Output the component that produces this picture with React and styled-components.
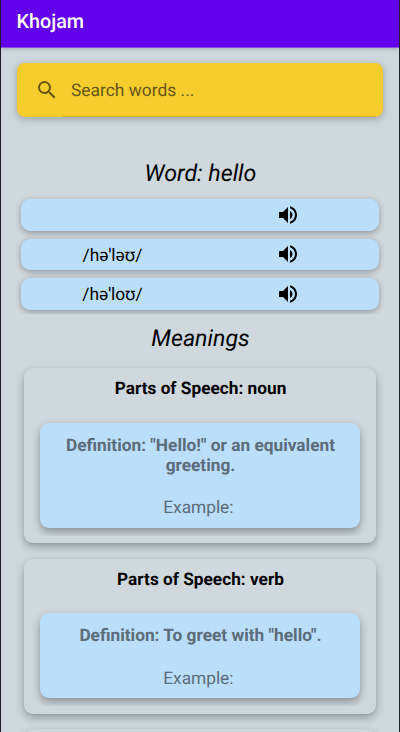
import React from "react";
import styled, { createGlobalStyle } from "styled-components";

const Global = createGlobalStyle`
  *, *::before, *::after { box-sizing: border-box; }
  body { margin: 0; overflow: hidden; background: #cfd8dd; }
`;

const Screen = styled.main`
  display: flex;
  flex-direction: column;
  height: 732px;
  overflow: hidden;
  border-left: 1px solid #1f1c2b;
  border-right: 1px solid #22252a;
  background: #cfd8dd;
  color: #000;
  font-family: Roboto, "Noto Sans", sans-serif;
  text-align: center;
  text-rendering: geometricPrecision;
`;

const AppBar = styled.header`
  flex: none;
  height: 48px;
  padding: 0 15.5px;
  background: #6200ee;
  border-bottom: 1px solid #8a50dc;
  box-shadow: 0 1px 5px rgba(0, 0, 0, 0.2);
  color: #fff;
  font-size: 19.8px;
  font-weight: 500;
  line-height: 43px;
  text-align: left;
`;

const SearchField = styled.div`
  flex: none;
  display: flex;
  align-items: center;
  height: 54px;
  margin: 15px 16px 0;
  width: 366px;
  padding-left: 18px;
  border-radius: 8px;
  background: linear-gradient(#d2ae2b, #d2ae2b) 46px 100% / 313px 1px no-repeat #f7cc2d;
  box-shadow: 0 2px 9px rgba(0, 0, 0, 0.26);
  color: #675617;
  font-size: 17.4px;
`;

const SearchText = styled.span`
  padding-top: 2px;
`;

const SearchGlyph = styled.svg`
  width: 24px;
  height: 24px;
  margin-right: 12px;
  fill: currentColor;
`;

const Heading = styled.h1`
  flex: none;
  height: 28px;
  margin: ${(p) => p.$top}px 0 0;
  padding-left: 1px;
  font-size: 23.2px;
  font-style: italic;
  font-weight: 400;
  line-height: 28px;
`;

const PhoneticList = styled.section`
  flex: none;
  display: flex;
  flex-direction: column;
  gap: 8px;
  height: 118px;
  width: 368px;
  margin: 9px auto 0;
  padding: 3px 5px 0;
  overflow: hidden;
`;

const PhoneticRow = styled.div`
  flex: none;
  display: grid;
  grid-template-columns: 183px 168px;
  align-items: center;
  height: 31.6px;
  border-radius: 9px;
  background: #bbdefb;
  box-shadow: 0 2px 6px rgba(0, 0, 0, 0.3);
  font-size: 17.4px;
`;

const PhoneticText = styled.span`
  padding-top: 1px;
`;

const SpeakerButton = styled.button`
  justify-self: center;
  display: flex;
  padding: 0;
  border: 0;
  background: none;
  color: #000;
`;

const SpeakerGlyph = styled.svg`
  width: 24px;
  height: 24px;
  fill: currentColor;
`;

const MeaningCard = styled.article`
  flex: none;
  width: 352px;
  height: ${(p) => p.$height}px;
  margin: 0 auto ${(p) => p.$gap}px;
  border-radius: 9px;
  background: #cfd8dd;
  box-shadow: 0 4px 9px rgba(0, 0, 0, 0.29), 0 0 3px rgba(0, 0, 0, 0.04);
`;

const Speech = styled.h2`
  height: 46.6px;
  margin: 0;
  padding-left: 1px;
  font-size: 17.25px;
  font-weight: 700;
  line-height: 43.4px;
`;

const DefinitionArea = styled.div`
  margin: 0 8px;
  padding: 8px 8px;
  overflow: hidden;
`;

const Definition = styled.div`
  display: flex;
  flex-direction: column;
  justify-content: space-between;
  height: ${(p) => p.$height}px;
  padding: 13px 18px 9px 19px;
  border-radius: 9px;
  background: #bbdefb;
  box-shadow: 0 4px 9px rgba(0, 0, 0, 0.33);
  color: #5b6d7b;
  font-size: 17.3px;
  line-height: 20.5px;
`;

const Meaning = styled.p`
  margin: 0;
  font-weight: 700;
`;

const Example = styled.p`
  margin: 0;
  white-space: pre;
`;

const Meanings = styled.section`
  flex: none;
  margin-top: 16px;
`;

const phonetics = ["", "/həˈləʊ/", "/həˈloʊ/"];

const meanings = [
  { part: "noun", text: '"Hello!" or an equivalent greeting.', height: 175.3, inner: 105, gap: 15.5 },
  { part: "verb", text: 'To greet with "hello".', height: 155, inner: 84.8, gap: 15.2 },
];

function Speaker() {
  return (
    <SpeakerButton aria-label="Play pronunciation">
      <SpeakerGlyph viewBox="0 0 24 24">
        <path d="M3 9v6h4l5 5V4L7 9H3zm13.5 3c0-1.77-1.02-3.29-2.5-4.03v8.05c1.48-.73 2.5-2.25 2.5-4.02zM14 3.23v2.06c2.89.86 5 3.54 5 6.71s-2.11 5.85-5 6.71v2.06c4.01-.91 7-4.49 7-8.77s-2.99-7.86-7-8.77z" />
      </SpeakerGlyph>
    </SpeakerButton>
  );
}

export default function App() {
  return (
    <>
      <Global />
      <Screen>
        <AppBar>Khojam</AppBar>
        <SearchField>
          <SearchGlyph viewBox="0 0 24 24">
            <path d="M15.5 14h-.79l-.28-.27A6.47 6.47 0 0 0 16 9.5 6.5 6.5 0 1 0 9.5 16c1.61 0 3.09-.59 4.23-1.57l.27.28v.79l5 4.99L20.49 19l-4.99-5zm-6 0C7.01 14 5 11.99 5 9.5S7.01 5 9.5 5 14 7.01 14 9.5 11.99 14 9.5 14z" />
          </SearchGlyph>
          <SearchText>Search words ...</SearchText>
        </SearchField>
        <Heading $top={42}>Word: hello</Heading>
        <PhoneticList>
          {phonetics.map((text) => (
            <PhoneticRow key={text}>
              <PhoneticText>{text}</PhoneticText>
              <Speaker />
            </PhoneticRow>
          ))}
        </PhoneticList>
        <Heading $top={10}>Meanings</Heading>
        <Meanings>
          {meanings.map((m) => (
            <MeaningCard key={m.part} $height={m.height} $gap={m.gap}>
              <Speech>Parts of Speech: {m.part}</Speech>
              <DefinitionArea>
                <Definition $height={m.inner}>
                  <Meaning>Definition: {m.text}</Meaning>
                  <Example>{"Example: "}</Example>
                </Definition>
              </DefinitionArea>
            </MeaningCard>
          ))}
          <MeaningCard $height={155} $gap={0} />
        </Meanings>
      </Screen>
    </>
  );
}
